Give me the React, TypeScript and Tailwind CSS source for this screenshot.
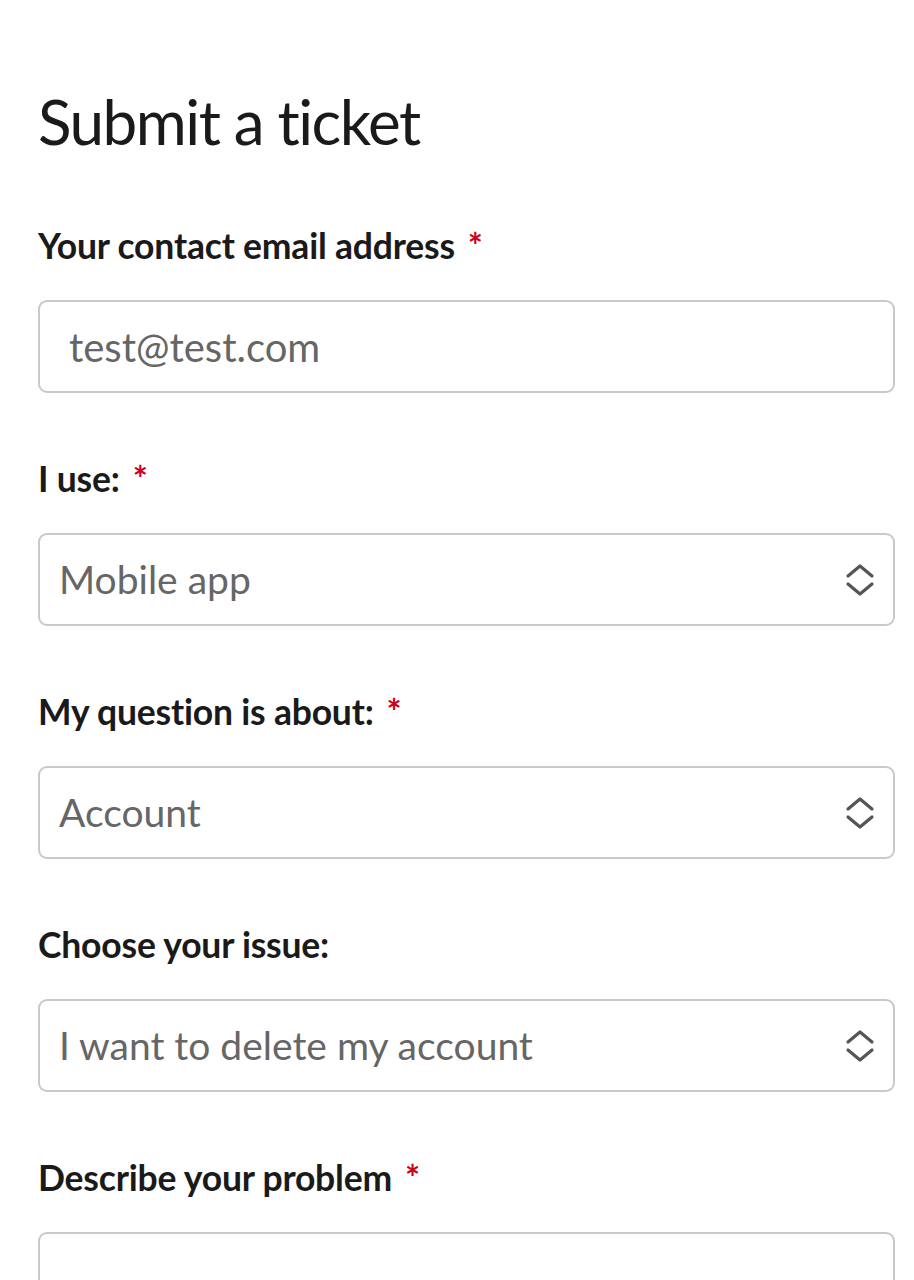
import React from "react";

function Chevrons() {
  return (
    <svg
      className="w-[30px] h-[34px] text-[#555]"
      viewBox="0 0 30 34"
      fill="none"
      stroke="currentColor"
      strokeWidth={3.2}
      strokeLinecap="round"
      strokeLinejoin="round"
    >
      <path d="M3 13 L15 3 L27 13" />
      <path d="M3 21 L15 31 L27 21" />
    </svg>
  );
}

function Label({ text, required }: { text: string; required?: boolean }) {
  return (
    <div className="h-[44px] flex items-center text-[35.5px] font-bold text-[#1a1a1a] leading-none tracking-[-0.2px]">
      <span>{text}</span>
      {required && <span className="ml-[13px] text-[#d0021b]">*</span>}
    </div>
  );
}

function SelectBox({ value }: { value: string }) {
  return (
    <div className="mt-[32px] h-[93px] rounded-[9px] border-2 border-[#c9c9c9] flex items-center justify-between pl-[19px] pr-[18px]">
      <span className="text-[39px] text-[#666]">{value}</span>
      <Chevrons />
    </div>
  );
}

export default function App() {
  return (
    <div
      className="min-h-screen bg-white pl-[38px] pr-[19px] pt-[83px] [font-variant-ligatures:none]"
      style={{ fontFamily: "Lato, 'Liberation Sans', sans-serif" }}
    >
      <h1 className="text-[62px] leading-[76px] tracking-[-1.5px] text-[#1a1a1a] font-normal">
        Submit a ticket
      </h1>

      <div className="mt-[65px]">
        <Label text="Your contact email address" required />
        <div className="mt-[32px] h-[93px] rounded-[9px] border-2 border-[#c9c9c9] flex items-center pl-[29px]">
          <span className="text-[40px] text-[#666]">test@test.com</span>
        </div>
      </div>

      <div className="mt-[64px]">
        <Label text="I use:" required />
        <SelectBox value="Mobile app" />
      </div>

      <div className="mt-[64px]">
        <Label text="My question is about:" required />
        <SelectBox value="Account" />
      </div>

      <div className="mt-[64px]">
        <Label text="Choose your issue:" />
        <SelectBox value="I want to delete my account" />
      </div>

      <div className="mt-[64px]">
        <Label text="Describe your problem" required />
        <div className="mt-[32px] h-[200px] rounded-[9px] border-2 border-[#c9c9c9]" />
      </div>
    </div>
  );
}
